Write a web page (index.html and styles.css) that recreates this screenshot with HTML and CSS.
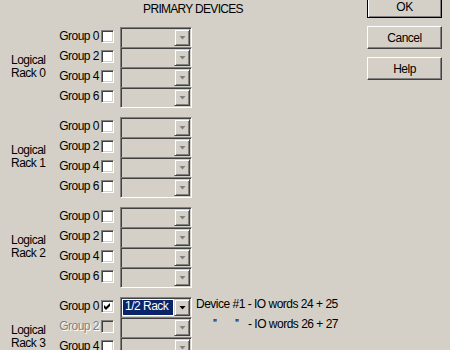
FILE: index.html
```html
<!DOCTYPE html>
<html lang="en">
<head>
    <meta charset="UTF-8">
    <meta name="viewport" content="width=device-width, initial-scale=1.0">
    <title>Primary Devices</title>
    <link rel="stylesheet" href="styles.css">
</head>
<body>

<div class="dialog">
    <div class="main">
        <div class="title">PRIMARY DEVICES</div>

        <div class="rack">
            <div class="rack-label">Logical<br>Rack 0</div>
            <div class="rows">
                <div class="row"><span class="grp">Group 0</span><span class="check"></span><div class="combo"><span class="field"></span><span class="drop"><i class="arrow"></i></span></div></div>
                <div class="row"><span class="grp">Group 2</span><span class="check"></span><div class="combo"><span class="field"></span><span class="drop"><i class="arrow"></i></span></div></div>
                <div class="row"><span class="grp">Group 4</span><span class="check"></span><div class="combo"><span class="field"></span><span class="drop"><i class="arrow"></i></span></div></div>
                <div class="row"><span class="grp">Group 6</span><span class="check"></span><div class="combo"><span class="field"></span><span class="drop"><i class="arrow"></i></span></div></div>
            </div>
        </div>

        <div class="rack">
            <div class="rack-label">Logical<br>Rack 1</div>
            <div class="rows">
                <div class="row"><span class="grp">Group 0</span><span class="check"></span><div class="combo"><span class="field"></span><span class="drop"><i class="arrow"></i></span></div></div>
                <div class="row"><span class="grp">Group 2</span><span class="check"></span><div class="combo"><span class="field"></span><span class="drop"><i class="arrow"></i></span></div></div>
                <div class="row"><span class="grp">Group 4</span><span class="check"></span><div class="combo"><span class="field"></span><span class="drop"><i class="arrow"></i></span></div></div>
                <div class="row"><span class="grp">Group 6</span><span class="check"></span><div class="combo"><span class="field"></span><span class="drop"><i class="arrow"></i></span></div></div>
            </div>
        </div>

        <div class="rack">
            <div class="rack-label">Logical<br>Rack 2</div>
            <div class="rows">
                <div class="row"><span class="grp">Group 0</span><span class="check"></span><div class="combo"><span class="field"></span><span class="drop"><i class="arrow"></i></span></div></div>
                <div class="row"><span class="grp">Group 2</span><span class="check"></span><div class="combo"><span class="field"></span><span class="drop"><i class="arrow"></i></span></div></div>
                <div class="row"><span class="grp">Group 4</span><span class="check"></span><div class="combo"><span class="field"></span><span class="drop"><i class="arrow"></i></span></div></div>
                <div class="row"><span class="grp">Group 6</span><span class="check"></span><div class="combo"><span class="field"></span><span class="drop"><i class="arrow"></i></span></div></div>
            </div>
        </div>

        <div class="rack">
            <div class="rack-label">Logical<br>Rack 3</div>
            <div class="rows">
                <div class="row">
                    <span class="grp">Group 0</span>
                    <span class="check">
                        <svg width="9" height="9" viewBox="0 0 9 9"><polygon points="1,3 3,5 7,1 7,4 3,8 1,6" fill="#000"/></svg>
                    </span>
                    <div class="combo active"><span class="field"><span class="sel">1/2 Rack</span></span><span class="drop"><i class="arrow"></i></span></div>
                    <span class="note">Device #1 - IO words 24 + 25</span>
                </div>
                <div class="row">
                    <span class="grp disabled">Group 2</span>
                    <span class="check off"></span>
                    <div class="combo"><span class="field"></span><span class="drop"><i class="arrow"></i></span></div>
                    <span class="note"><span class="ditto-a">''</span><span class="ditto-b">''</span>- IO words 26 + 27</span>
                </div>
                <div class="row"><span class="grp">Group 4</span><span class="check"></span><div class="combo"><span class="field"></span><span class="drop"><i class="arrow"></i></span></div></div>
                <div class="row"><span class="grp">Group 6</span><span class="check"></span><div class="combo"><span class="field"></span><span class="drop"><i class="arrow"></i></span></div></div>
            </div>
        </div>
    </div>

    <div class="side">
        <button class="btn default">OK</button>
        <button class="btn">Cancel</button>
        <button class="btn">Help</button>
    </div>
</div>

</body>
</html>
```

FILE: styles.css
```css
body {
    font-family: "Liberation Sans", Arial, sans-serif;
    font-size: 12px;
    letter-spacing: -0.5px;
    color: #000;
    background-color: #d4d0c8;
    margin: 0;
    width: 450px;
    height: 350px;
    overflow: hidden;
}
.dialog {
    display: flex;
}
.main {
    width: 367px;
}
.title {
    line-height: 13px;
    padding: 3px 0 11px 19px;
    text-align: center;
    letter-spacing: -0.7px;
}
.rack {
    display: flex;
    align-items: center;
    margin-bottom: 10px;
}
.rack-label {
    width: 59px;
    padding-left: 11px;
    box-sizing: border-box;
    line-height: 13px;
}
.rows {
    display: flex;
    flex-direction: column;
}
.row {
    display: flex;
    align-items: flex-start;
    height: 20px;
}
.grp {
    width: 40px;
    text-align: right;
    line-height: 13px;
    margin-top: 3px;
    white-space: nowrap;
}
.grp.disabled {
    color: #808080;
    text-shadow: 1px 1px 0 #fff;
}
.check {
    width: 13px;
    height: 13px;
    box-sizing: border-box;
    margin: 3px 0 0 2px;
    padding: 1px;
    border: 1px solid;
    border-color: #808080 #fff #fff #808080;
    box-shadow: inset 1px 1px #404040, inset -1px -1px #d4d0c8;
    background: #fff;
    display: flex;
}
.check svg {
    display: block;
}
.check.off {
    background: #d4d0c8;
}
.combo {
    width: 72px;
    height: 21px;
    box-sizing: border-box;
    margin-left: 6px;
    padding: 1px;
    border: 1px solid;
    border-color: #808080 #fff #fff #808080;
    box-shadow: inset 1px 1px #404040, inset -1px -1px #d4d0c8;
    background: #d4d0c8;
    display: flex;
}
.combo.active {
    background: #fff;
}
.field {
    flex: 1;
    display: flex;
}
.sel {
    flex: 1;
    margin: 1px;
    padding-left: 2px;
    background: #0a246a;
    color: #fff;
    line-height: 13px;
}
.drop {
    width: 16px;
    height: 17px;
    box-sizing: border-box;
    border: 1px solid;
    border-color: #d4d0c8 #404040 #404040 #d4d0c8;
    box-shadow: inset 1px 1px #fff, inset -1px -1px #808080;
    background: #d4d0c8;
    display: flex;
    align-items: center;
    justify-content: center;
}
.arrow {
    display: block;
    width: 7px;
    height: 4px;
    margin-left: 1px;
    background: #808080;
    clip-path: polygon(0 0, 100% 0, 50% 100%);
}
.combo.active .arrow {
    background: #000;
}
.note {
    margin: 1px 0 0 4px;
    line-height: 13px;
    white-space: nowrap;
}
.ditto-a {
    display: inline-block;
    width: 22px;
    margin-left: 17px;
}
.ditto-b {
    display: inline-block;
    width: 13px;
}
.side {
    width: 75px;
    margin-top: -5px;
    display: flex;
    flex-direction: column;
    gap: 8px;
}
.btn {
    width: 75px;
    height: 23px;
    box-sizing: border-box;
    padding: 0;
    font: inherit;
    letter-spacing: inherit;
    color: #000;
    background: #d4d0c8;
    border: 1px solid;
    border-color: #fff #404040 #404040 #fff;
    box-shadow: inset -1px -1px #808080;
}
.btn.default {
    border-color: #000;
    box-shadow: inset 1px 1px #fff, inset -1px -1px #808080;
}
```
